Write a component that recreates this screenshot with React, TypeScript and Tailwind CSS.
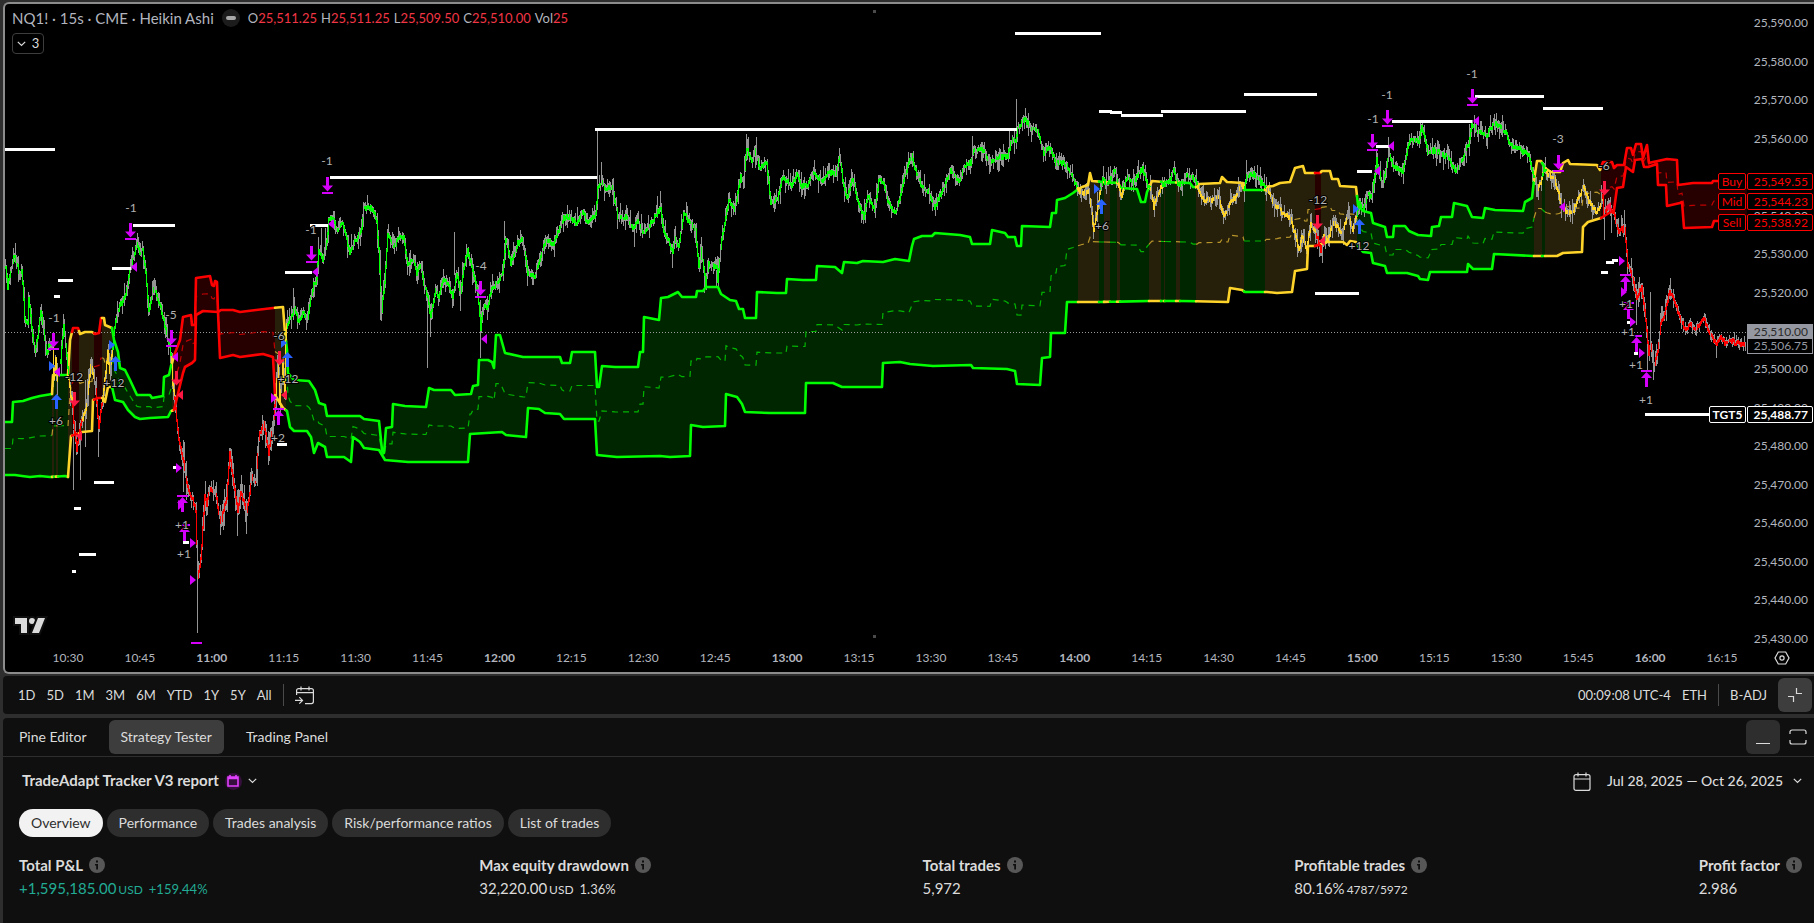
import React from "react";

type Pt = [number, number];
type Tone = "g" | "y" | "r";

const parse = (s: string): Pt[] =>
  s
    .trim()
    .split(/\s+/)
    .map((p) => p.split(",").map(Number) as Pt);

const LINE: Record<Tone, string> = { g: "#00ff00", y: "#ffd42a", r: "#ff0000" };
const FILL: Record<Tone, string> = { g: "#002600", y: "#26200b", r: "#260000" };
const MID: Record<Tone, string> = { g: "#00b400", y: "#b8952a", r: "#c00000" };

const UPPER = parse(`5,422 12,422 13,402 23,401 32,398 40,396 52,394 53,375 68,375 70,340 73,328 78,328 80,334 85,332 92,332 95,334 99,333 101,318
104,318 105,325 112,328 114,340 118,352 120,368 125,370 130,380 137,395 150,395 152,398 163,396 164,377 169,375 171,366 175,353 180,340 183,317
191,315 192,325 195,325 196,278 203,277 210,276 212,285 214,286 215,281 217,282 218,312 221,310 233,310 240,312 248,311 273,308 283,307 285,333 287,350 288,373
294,380 309,381 315,390 319,403 325,405 327,416 360,416 364,419 379,421 382,450 384,453 386,428 392,427 393,404 405,406 426,407 429,388 434,390
451,390 455,395 471,394 473,386 478,385 479,360 488,360 492,362 494,368 496,335 500,335 505,353 523,357 560,357 562,363 570,363 572,352 595,352
597,387 599,387 602,366 615,367 638,367 640,352 643,352 644,317 659,320 661,298 668,297 678,292 682,297 696,297 697,291 703,291 706,287 718,287 721,294
730,300 736,301 739,309 743,309 745,318 756,318 757,292 777,293 786,293 787,279 803,280 816,280 817,266 835,267 842,273 844,262 857,263 863,261
883,262 895,259 909,261 912,246 914,239 922,236 932,236 935,233 960,235 970,237 972,244 990,244 992,230 1005,233 1008,237 1015,237 1017,246
1021,246 1022,226 1050,227 1052,213 1056,213 1057,200 1065,198 1073,193 1077,190 1082,187 1088,185 1090,173 1092,181 1103,182 1118,183 1121,188
1137,189 1141,202 1145,202 1147,192 1152,181 1163,182 1190,183 1193,187 1197,187 1199,184 1220,183 1222,177 1227,182 1243,183 1244,190 1265,190
1266,187 1273,186 1280,183 1290,182 1295,168 1303,166 1305,173 1320,173 1322,171 1330,171 1332,179 1338,179 1340,186 1356,187 1358,205 1363,211
1371,213 1373,223 1385,227 1387,237 1393,237 1394,226 1405,226 1409,231 1418,235 1431,236 1432,227 1439,226 1441,217 1452,217 1454,203 1467,206
1472,217 1483,218 1485,208 1495,210 1523,211 1525,202 1532,198 1534,180 1537,161 1541,161 1545,168 1551,172 1560,172 1563,163 1568,160 1570,164
1597,165 1600,170 1603,162 1612,162 1614,168 1617,165 1624,165 1627,148 1631,148 1633,155 1636,144 1641,144 1643,158 1647,145 1649,163 1653,162
1667,159 1677,160 1678,185 1693,183 1712,183 1713,181 1718,181`);

const LOWER = parse(`5,475 15,475 22,476 30,477 40,476 50,477 65,476 68,477 71,436 82,432 92,431 93,400 98,398 103,398 105,402 108,387 112,387 115,400 123,402
128,410 135,417 140,419 150,418 168,417 171,411 174,410 176,402 183,373 185,367 192,363 195,360 196,315 203,311 218,312 220,358 233,355 240,357 263,354
273,357 275,395 283,408 287,411 290,427 294,431 307,431 311,437 314,453 318,443 325,447 327,457 344,457 351,462 353,437 360,442 364,448 379,450
385,460 408,462 468,462 470,434 502,432 506,435 526,437 528,408 539,409 545,413 560,414 564,419 595,419 597,455 617,457 660,456 670,457 690,456
691,425 703,427 725,426 726,394 737,397 742,404 745,412 770,413 805,413 806,383 833,383 842,387 882,387 883,363 900,362 910,364 933,366 971,365
973,368 1007,369 1015,371 1017,384 1040,385 1042,358 1050,357 1051,333 1065,333 1067,302 1100,302 1150,301 1180,301 1228,302 1230,288 1242,290
1245,292 1267,292 1277,293 1292,292 1295,271 1307,269 1308,246 1315,246 1327,242 1343,242 1347,245 1350,241 1356,242 1358,246 1363,252 1371,253
1373,263 1385,266 1387,273 1407,273 1418,276 1420,279 1428,280 1430,272 1467,272 1468,264 1473,269 1492,269 1494,254 1533,256 1547,256 1557,256
1563,253 1582,252 1583,227 1588,222 1601,218 1614,210 1617,188 1623,187 1626,167 1633,172 1635,160 1642,159 1644,167 1648,167 1657,164 1658,185
1666,185 1667,206 1680,203 1682,202 1684,228 1712,227 1714,221 1718,221`);

// Band tone for each stretch: the tone holds from the given x up to the next entry.
const ZONES: [number, Tone][] = [
  [5, "g"], [52, "y"], [54, "g"], [56, "y"], [58, "g"], [68, "y"], [72, "r"], [79, "y"], [94, "r"], [102, "y"], [112, "g"],
  [172, "y"], [174, "r"], [275, "y"], [286, "g"], [1078, "y"], [1099, "g"], [1104, "y"], [1110, "g"], [1117, "y"], [1120, "g"],
  [1149, "y"], [1161, "g"], [1164, "y"], [1165, "g"], [1176, "y"], [1180, "g"], [1196, "y"], [1244, "g"], [1265, "y"],
  [1315, "r"], [1321, "y"], [1357, "g"], [1534, "y"], [1542, "g"], [1545, "y"], [1601, "r"],
];
const BAND_END = 1718;

const PRICE: [Tone, string][] = [
  ["g", "5,267 7,286 10,272 13,254 16,262 19,275 21,268 24,317 27,322 28,298 31,325 34,350 37,335 40,310 43,330 46,353 49,342 52,343"],
  ["y", "52,343 53,378 55,360 57,380"],
  ["g", "60,360 63,323 65,345 67,367 68,376"],
  ["y", "68,376 70,395 72,405"],
  ["r", "72,405 73,423 76,448 80,425 82,418"],
  ["y", "82,418 86,403 90,363 93,378 95,390"],
  ["r", "95,390 98,427 100,412 102,400"],
  ["y", "102,400 104,380 107,353 109,370 112,348"],
  ["g", "112,348 113,333 117,310 121,302 125,293 130,267 133,255 136,243 139,252 142,250 145,273 148,310 151,298 153,287 160,307 166,333 171,357"],
  ["y", "171,357 172,383 174,397"],
  ["r", `174,397 175,410 178,437 183,463 187,487 191,497 195,510 197,577 200,560 204,497 206,503 210,487 215,493 220,523 226,497 229,453 233,483 237,510
  240,490 246,513 251,477 255,483 258,437 263,423 268,453 272,427 275,397`],
  ["y", "275,397 277,360 279,402 281,380 282,363 284,395 285,340 286,325"],
  ["g", `286,325 290,317 294,308 298,323 303,312 307,320 311,293 313,283 316,280 318,250 322,258 326,243 328,220 332,217 337,230 342,223 345,233 349,253 353,243 357,237
  361,227 363,208 368,207 373,210 376,220 378,250 381,310 384,280 387,233 393,247 398,237 403,238 407,263 413,260 416,273 419,263 423,283 427,297
  430,317 435,290 438,297 443,277 448,283 452,297 456,273 460,293 463,267 467,250 472,270 477,290 480,327 483,307 487,307 491,287 497,283 502,273
  505,237 510,263 517,243 522,238 527,273 534,277 538,263 545,240 553,243 558,230 563,217 570,217 575,223 582,212 587,223 595,213 597,187 602,183
  605,188 612,187 617,217 625,217 632,227 637,220 643,233 650,223 655,215 660,207 663,233 668,240 672,253 674,237 678,247 683,213 690,223 695,230
  698,267 701,250 705,283 708,263 716,267 717,280 721,240 728,200 734,210 740,177 743,183 746,147 751,162 755,150 759,167 766,163 770,202 777,197
  782,177 792,185 796,173 800,185 807,185 812,173 822,180 828,172 835,173 839,157 843,187 846,198 852,177 857,200 863,217 867,195 874,210 878,180
  883,182 887,202 895,212 899,200 903,178 911,155 915,170 922,188 928,190 934,207 943,187 950,170 959,182 963,165 970,162 973,148 983,150 988,162
  997,157 1007,155 1011,140 1015,140 1017,127 1024,118 1030,127 1038,133 1043,152 1050,147 1055,163 1065,163 1070,173 1077,188`],
  ["y", "1077,188 1082,194 1088,190 1093,230 1097,207 1100,188"],
  ["g", "1100,188 1102,180 1108,183 1114,170 1118,184"],
  ["y", "1118,184 1121,197 1123,184"],
  ["g", "1123,184 1127,177 1132,183 1138,173 1142,168 1147,187 1150,189"],
  ["y", "1150,189 1153,207 1160,187 1162,184"],
  ["g", "1162,184 1167,183 1173,170 1177,183 1183,183 1186,173 1195,180 1197,187"],
  ["y", "1197,187 1203,200 1212,200 1218,197 1223,217 1230,200 1235,197 1240,185 1244,187"],
  ["g", "1244,187 1246,177 1253,173 1260,182 1266,188"],
  ["y", "1266,188 1273,203 1282,213 1290,217 1294,233 1298,250 1301,237 1306,247 1310,223 1315,232"],
  ["r", "1315,232 1318,242 1320,250 1322,242"],
  ["y", "1322,242 1323,237 1327,241 1330,230 1333,222 1342,233 1347,213 1352,230 1356,215"],
  ["g", `1356,215 1358,203 1363,207 1367,193 1371,197 1374,177 1376,160 1382,187 1385,170 1388,153 1393,167 1402,170 1406,153 1409,140 1418,140 1421,127 1425,140
  1427,152 1433,150 1440,153 1448,157 1453,168 1457,170 1462,157 1468,143 1471,123 1478,132 1486,135 1490,127 1496,123 1505,132 1510,145 1517,147
  1528,155 1534,180`],
  ["y", "1534,180 1537,190 1542,175"],
  ["g", "1542,175 1543,167 1546,172"],
  ["y", "1546,172 1553,177 1558,193 1561,207 1567,213 1572,213 1576,200 1583,187 1588,200 1596,213 1602,197"],
  ["r", `1602,197 1603,213 1607,207 1613,213 1617,230 1624,228 1627,263 1632,277 1636,297 1641,287 1645,320 1648,353 1650,343 1653,367 1657,350 1660,323
  1663,317 1669,290 1675,303 1679,317 1685,330 1689,323 1695,330 1703,317 1708,333 1716,343 1720,337 1725,343 1730,340 1737,343 1745,345`],
];

const SPIKES = [
  [73, 430, 490], [80, 420, 480], [98, 420, 457], [85, 380, 447], [197, 577, 633], [183, 440, 492], [237, 490, 536], [246, 500, 534], [220, 505, 535],
  [293, 288, 318], [318, 237, 250], [321, 228, 255], [325, 228, 250], [380, 250, 320], [427, 297, 368], [430, 317, 337], [480, 300, 358], [597, 129, 190], [601, 162, 183],
  [454, 232, 275], [504, 221, 240], [460, 280, 311], [634, 230, 247], [660, 191, 212], [672, 253, 268], [704, 275, 293], [716, 270, 287], [746, 134, 150],
  [839, 148, 160], [972, 136, 150], [1009, 131, 150], [1016, 99, 130], [1093, 215, 239], [1138, 160, 175], [1246, 160, 180],
  [1322, 240, 263], [1388, 137, 155], [1376, 155, 165], [1403, 165, 184], [1545, 157, 170], [1604, 215, 240], [1611, 205, 233], [1624, 210, 228],
  [1631, 258, 277], [1636, 284, 325], [1650, 292, 350], [1647, 340, 370], [1653, 350, 380], [1716, 340, 358],
];

const TARGETS: [number, number, number][] = [
  [5, 55, 149], [58, 73, 280], [54, 60, 296], [112, 131, 268], [133, 175, 225], [330, 597, 177], [310, 328, 225], [285, 312, 272], [595, 1017, 129],
  [94, 114, 482], [74, 81, 508], [79, 96, 554], [72, 76, 571], [173, 176, 467], [183, 189, 542], [277, 287, 444], [1015, 1101, 33], [1099, 1112, 111],
  [1110, 1122, 112], [1121, 1163, 115], [1161, 1246, 111], [1244, 1317, 94], [1315, 1359, 293], [1357, 1372, 171], [1376, 1389, 146], [1392, 1472, 121],
  [1475, 1544, 96], [1543, 1603, 108], [1606, 1614, 262], [1612, 1618, 260], [1601, 1608, 272], [1627, 1630, 322], [1634, 1638, 353], [1645, 1709, 414],
];

const PURPLE = "#d500f9";
const BLUE = "#2962ff";
const RED = "#ff1744";

const EXITS_DOWN: Pt[] = [[53, 333], [130, 223], [171, 330], [311, 246], [327, 177], [480, 281], [1372, 134], [1387, 110], [1472, 89], [1558, 155]];
const EXITS_UP: Pt[] = [[278, 409], [182, 496], [184, 525], [1625, 275], [1628, 303], [1636, 336], [1646, 371]];
const BUYS: Pt[] = [[56, 393], [115, 355], [287, 351], [1101, 198], [1359, 218]];
const SELLS: Pt[] = [[74, 392], [176, 371], [279, 351], [1317, 215], [1604, 181]];
const LEFT_TRI: [number, number, string][] = [
  [57, 372, PURPLE], [134, 267, PURPLE], [175, 357, PURPLE], [315, 272, PURPLE], [331, 224, PURPLE], [484, 339, PURPLE], [1377, 171, PURPLE],
  [1391, 146, PURPLE], [1476, 121, PURPLE], [1562, 207, PURPLE], [79, 436, RED], [180, 395, RED], [284, 395, RED], [1322, 241, RED], [1608, 207, RED],
];
const RIGHT_TRI: [number, number, string][] = [
  [52, 366, BLUE], [112, 345, BLUE], [284, 343, BLUE], [1097, 189, BLUE], [1356, 209, BLUE], [274, 398, PURPLE], [179, 468, PURPLE],
  [181, 505, PURPLE], [193, 543, PURPLE], [193, 580, PURPLE], [1622, 261, PURPLE], [1624, 292, PURPLE], [1633, 322, PURPLE], [1642, 353, PURPLE],
];
const QTY: [number, number, string][] = [
  [54, 318, "-1"], [131, 208, "-1"], [171, 315, "-5"], [74, 377, "-12"], [56, 421, "+6"], [114, 383, "+12"], [279, 336, "-6"], [288, 379, "+12"],
  [278, 438, "+2"], [182, 525, "+1"], [184, 554, "+1"], [311, 230, "-1"], [327, 161, "-1"], [481, 266, "-4"], [1102, 226, "+6"], [1318, 200, "-12"],
  [1359, 246, "+12"], [1373, 119, "-1"], [1387, 95, "-1"], [1472, 74, "-1"], [1558, 139, "-3"], [1604, 166, "-6"], [1626, 304, "+1"],
  [1628, 332, "+1"], [1636, 365, "+1"], [1646, 400, "+1"],
];

const at = (pts: Pt[], x: number): number => {
  if (x <= pts[0][0]) return pts[0][1];
  for (let i = 1; i < pts.length; i++) {
    if (x <= pts[i][0]) {
      const [x0, y0] = pts[i - 1];
      const [x1, y1] = pts[i];
      return x1 === x0 ? y1 : y0 + ((y1 - y0) * (x - x0)) / (x1 - x0);
    }
  }
  return pts[pts.length - 1][1];
};

const cut = (pts: Pt[], a: number, b: number): Pt[] => [
  [a, at(pts, a)],
  ...pts.filter(([x]) => x > a && x < b),
  [b, at(pts, b)],
];

const MIDDLE: Pt[] = Array.from(new Set([...UPPER, ...LOWER].map(([x]) => x)))
  .sort((a, b) => a - b)
  .map((x) => [x, (at(UPPER, x) + at(LOWER, x)) / 2]);

const join = (pts: Pt[]) => pts.map(([x, y]) => `${x},${y.toFixed(1)}`).join(" ");

const bands = ZONES.map(([a, tone], i) => {
  const b = i + 1 < ZONES.length ? ZONES[i + 1][0] : BAND_END;
  const up = cut(UPPER, a, b);
  const low = cut(LOWER, a, b);
  return { a, tone, up: join(up), low: join(low), mid: join(cut(MIDDLE, a, b)), area: join([...up, ...low.slice().reverse()]) };
});

// Deterministic noise, so that every render draws the same candles.
const noise = (() => {
  let s = 20251026;
  return () => {
    s = (s * 1664525 + 1013904223) % 4294967296;
    return s / 4294967296;
  };
})();

const candles = PRICE.map(([tone, s]) => {
  const pts = parse(s);
  const a = pts[0][0];
  const b = pts[pts.length - 1][0];
  let wick = "";
  let body = "";
  let prev = at(pts, a);
  for (let x = a; x <= b; x++) {
    const y = at(pts, x) + (noise() - 0.5) * 4;
    const amp = x > 1676 ? 5 : x > 180 && x < 275 ? 13 : 9;
    const lo = Math.min(prev, y);
    const hi = Math.max(prev, y);
    wick += `M${x + 0.5} ${Math.round(lo - 1 - noise() * noise() * amp * 1.6)}V${Math.round(hi + 1 + noise() * noise() * amp * 1.6)}`;
    if (noise() > 0.15) body += `M${x + 0.5} ${Math.round(lo - 1)}V${Math.round(hi + 2)}`;
    prev = y;
  }
  return { tone, wick, body };
});

const spikePath = SPIKES.map(([x, a, b]) => `M${x + 0.5} ${a}V${b}`).join("");

function Arrow({ x, y, dir, color, bar }: { x: number; y: number; dir: "up" | "down"; color: string; bar?: boolean }) {
  const shaft = dir === "down" ? "M-1 0h3v8.5h4L.5 14.5-5 8.5h4z" : "M.5 1L6 7H2V16h-3V7H-5z";
  return (
    <g transform={`translate(${x} ${y})`} fill={color}>
      <path d={shaft} />
      {bar && <rect x="-5" y={dir === "down" ? 15 : -1} width="11" height="2" />}
    </g>
  );
}

function Chart() {
  return (
    <svg
      className="block h-[640px] w-full"
      viewBox="5 4 1742 640"
      preserveAspectRatio="xMaxYMin slice"
      role="img"
      aria-label="NQ1! price chart"
    >
      {bands.map((z) => (
        <polygon key={z.a} points={z.area} fill={FILL[z.tone]} shapeRendering="crispEdges" />
      ))}
      <rect x="1718" y="181" width="29" height="40" fill={FILL.r} />
      <line x1="5" x2="1747" y1="332.5" y2="332.5" stroke="#9a9a9a" strokeDasharray="1 2" />
      {bands.map((z) => (
        <polyline key={z.a} points={z.mid} fill="none" stroke={MID[z.tone]} strokeDasharray="6 5" strokeWidth="1.2" />
      ))}
      <path d={candles.map((c) => c.wick).join("")} stroke="#949494" strokeWidth="1" fill="none" shapeRendering="crispEdges" />
      <path d={spikePath} stroke="#949494" strokeWidth="1" fill="none" shapeRendering="crispEdges" />
      {bands.map((z) => (
        <g key={z.a} fill="none" stroke={LINE[z.tone]} strokeWidth="2.6" strokeLinejoin="round" strokeLinecap="round">
          <polyline points={z.up} />
          <polyline points={z.low} />
        </g>
      ))}
      {candles.map((c, i) => (
        <path key={i} d={c.body} stroke={LINE[c.tone]} strokeWidth="1" fill="none" shapeRendering="crispEdges" />
      ))}
      {TARGETS.map(([a, b, y]) => (
        <rect key={`${a}-${y}`} x={a} y={y - 1} width={b - a} height="3" fill="#fff" />
      ))}
      {EXITS_DOWN.map(([x, y]) => (
        <Arrow key={`${x}-${y}`} x={x} y={y} dir="down" color={PURPLE} bar />
      ))}
      {EXITS_UP.map(([x, y]) => (
        <Arrow key={`${x}-${y}`} x={x} y={y} dir="up" color={PURPLE} bar />
      ))}
      {BUYS.map(([x, y]) => (
        <Arrow key={`${x}-${y}`} x={x} y={y} dir="up" color={BLUE} />
      ))}
      {SELLS.map(([x, y]) => (
        <Arrow key={`${x}-${y}`} x={x} y={y} dir="down" color={RED} />
      ))}
      {LEFT_TRI.map(([x, y, c]) => (
        <path key={`${x}-${y}`} d={`M${x - 3} ${y}l6 -5v10z`} fill={c} />
      ))}
      {RIGHT_TRI.map(([x, y, c]) => (
        <path key={`${x}-${y}`} d={`M${x + 3} ${y}l-6 -5v10z`} fill={c} />
      ))}
      {QTY.map(([x, y, t]) => (
        <text key={`${x}-${y}`} x={x} y={y + 4} fontSize="12" fill="#b2b2b2" stroke="#000" strokeWidth="2" paintOrder="stroke" textAnchor="middle">
          {t}
        </text>
      ))}
      <g fill="#dbdbdb" stroke="#0f0f0f" strokeWidth="4" paintOrder="stroke">
        <path d="M15 618h12v15h-6v-9h-6z" />
        <circle cx="32" cy="621" r="3" />
        <path d="M38 618h7l-6 15h-7z" />
      </g>
      <rect x="873" y="10" width="3" height="3" fill="#4a4a4a" />
      <rect x="873" y="635" width="3" height="3" fill="#4a4a4a" />
      <rect x="191" y="642" width="11" height="2" fill={PURPLE} />
    </svg>
  );
}

// Scale steps from 25,590 down to 25,430; null leaves a step blank where a tag stands in for it.
const PRICES = Array.from({ length: 17 }, (_, i) => (i === 4 || i === 8 ? null : `25,${590 - i * 10}.00`));
const TIMES = Array.from({ length: 24 }, (_, i) => {
  const m = 630 + i * 15;
  return `${Math.floor(m / 60)}:${String(m % 60).padStart(2, "0")}`;
});
const BOLD_TIMES = ["11:00", "12:00", "13:00", "14:00", "15:00", "16:00"];

function PriceTag({ className, nameClass = "w-[28px]", name, value }: { className: string; nameClass?: string; name: string; value: string }) {
  return (
    <div className={`absolute right-px flex h-[17px] gap-px text-xs leading-[15px] ${className}`}>
      <span className={`rounded-xs border border-current bg-black text-center ${nameClass}`}>{name}</span>
      <span className="w-[66px] rounded-xs border border-current bg-black pr-1 text-right">{value}</span>
    </div>
  );
}

function Legend() {
  const items: [string, string][] = [["O", "25,511.25"], ["H", "25,511.25"], ["L", "25,509.50"], ["C", "25,510.00"], ["Vol", "25"]];
  return (
    <div className="absolute top-1 left-[7px] flex flex-col items-start gap-[5px]">
      <div className="flex h-5 items-center text-[#b2b5be]">
        <h1 className="text-[15px] leading-5 whitespace-nowrap">NQ1! · 15s · CME · Heikin Ashi</h1>
        <span className="mx-2 flex size-[18px] items-center justify-center rounded-full bg-[#1c1c1c]">
          <span className="h-1 w-2.5 rounded-xs bg-[#a8a8a8]" />
        </span>
        <div className="flex gap-1 text-[13px]">
          {items.map(([k, v]) => (
            <span key={k}>
              {k}
              <span className="text-[#f23645]">{v}</span>
            </span>
          ))}
        </div>
      </div>
      <button type="button" className="flex h-[21px] w-8 items-center justify-center gap-1.5 rounded-sm border border-[#3d3d3d] bg-black text-[13px] text-[#dbdbdb]">
        <Chevron />3
      </button>
    </div>
  );
}

function Chevron() {
  return (
    <svg width="9" height="6" viewBox="0 0 9 6" fill="none" stroke="currentColor" strokeWidth="1.2" aria-hidden="true">
      <path d="M.8.8 4.5 4.5 8.2.8" />
    </svg>
  );
}

function Info() {
  return (
    <svg width="16" height="16" viewBox="0 0 16 16" aria-hidden="true">
      <circle cx="8" cy="8" r="8" fill="#575757" />
      <path d="M7 3.5h2v2H7zM6 7h3v5.5H7.2V8.4H6z" fill="#0f0f0f" />
    </svg>
  );
}

const RANGES = ["1D", "5D", "1M", "3M", "6M", "YTD", "1Y", "5Y", "All"];
const PILLS = ["Overview", "Performance", "Trades analysis", "Risk/performance ratios", "List of trades"];

function Metric({ label, children, className = "" }: { label: string; children: React.ReactNode; className?: string }) {
  return (
    <div>
      <dt className="flex items-center gap-1.5 text-[15px] leading-5 font-bold whitespace-nowrap">
        {label}
        <Info />
      </dt>
      <dd className={`flex items-baseline gap-0.5 pt-px text-[15px] leading-6 whitespace-nowrap ${className}`}>{children}</dd>
    </div>
  );
}

export default function App() {
  return (
    <div className="min-h-screen bg-[#2e2e2e] pt-0.5 pl-[3px] font-['Lato',sans-serif] text-sm text-[#dbdbdb]">
      <section className="relative rounded-tl-md rounded-bl-md border-y-2 border-l-2 border-[#8c8c8c] bg-black text-[#b2b5be]">
        <div className="grid h-[644px] grid-cols-[minmax(0,1fr)_67px]">
          <Chart />
          <ul className="flex h-[654px] flex-col justify-around pr-1.5 text-right text-xs leading-4">
            {PRICES.map((p, i) => (
              <li key={i} className="h-4">
                {p}
              </li>
            ))}
          </ul>
        </div>
        <div className="flex h-6 items-center pb-1">
          <ul className="ml-[27px] grid flex-1 grid-cols-24 text-center text-xs leading-4">
            {TIMES.map((t) => (
              <li key={t} className={BOLD_TIMES.includes(t) ? "font-bold" : ""}>
                {t}
              </li>
            ))}
          </ul>
          <button type="button" aria-label="Scale settings" className="flex w-14 items-center justify-center pr-2 text-[#dbdbdb]">
            <svg width="16" height="14" viewBox="0 0 16 14" fill="none" stroke="currentColor" strokeWidth="1.2">
              <path d="M4.3 1h7.4L15 7l-3.3 6H4.3L1 7z" />
              <circle cx="8" cy="7" r="2.1" />
            </svg>
          </button>
        </div>

        <Legend />

        <PriceTag className="top-[169px] text-[#ff0000]" name="Buy" value="25,549.55" />
        <PriceTag className="top-[189px] text-[#ff0000]" name="Mid" value="25,544.23" />
        <PriceTag className="top-[210px] text-[#ff0000]" name="Sell" value="25,538.92" />
        <PriceTag className="top-[402px] font-bold text-white" nameClass="w-[37px]" name="TGT5" value="25,488.77" />
        <div className="absolute top-[320px] right-px w-[66px] border border-[#9598a1] bg-black text-right text-xs leading-[14px] text-[#9598a1]">
          <div className="bg-[#9598a1] pr-1 text-[#2a2a2a]">25,510.00</div>
          <div className="pr-1">25,506.75</div>
        </div>
      </section>

      <nav className="mt-0.5 flex h-[38px] items-center justify-between rounded-l-sm bg-[#0f0f0f] pr-0.5 pl-[15px] text-[13px]" aria-label="Date range">
        <div className="flex items-center gap-[11px]">
          {RANGES.map((r) => (
            <button key={r} type="button">
              {r}
            </button>
          ))}
          <span className="h-[22px] w-px bg-[#4a4a4a]" />
          <button type="button" aria-label="Go to date">
            <svg width="20" height="19" viewBox="0 0 20 19" fill="none" stroke="currentColor" strokeWidth="1.2">
              <path d="M1.6 9V4.6a2 2 0 0 1 2-2h12.8a2 2 0 0 1 2 2v11a2 2 0 0 1-2 2H10M1.6 6.6h16.8M6 .5v4M14 .5v4M0 14.4h7.5M4.3 11.2l3.2 3.2-3.2 3.2" />
            </svg>
          </button>
        </div>
        <div className="flex items-center gap-[11px]">
          <button type="button">00:09:08 UTC-4</button>
          <button type="button">ETH</button>
          <span className="h-[22px] w-px bg-[#4a4a4a]" />
          <button type="button">B-ADJ</button>
          <button type="button" aria-label="Collapse panel" className="flex size-[34px] items-center justify-center rounded-md bg-[#3d3d3d]">
            <svg width="14" height="14" viewBox="0 0 14 14" fill="none" stroke="currentColor" strokeWidth="1.2">
              <path d="M8.5 0v5.5H14M0 8.5h5.5V14" />
            </svg>
          </button>
        </div>
      </nav>

      <section className="mt-1 rounded-tl-sm border-b border-black bg-[#0f0f0f]">
        <div className="flex h-[39px] items-center justify-between border-b border-[#2e2e2e] pr-0.5 pl-1">
          <div className="flex gap-2.5">
            <button type="button" className="h-[34px] px-3">Pine Editor</button>
            <button type="button" className="h-[34px] rounded-md bg-[#3d3d3d] px-3">Strategy Tester</button>
            <button type="button" className="h-[34px] px-3">Trading Panel</button>
          </div>
          <div className="flex gap-1">
            <button type="button" aria-label="Minimize" className="flex size-[34px] items-end justify-center rounded-md bg-[#2e2e2e] pb-2.5">
              <span className="h-px w-3.5 bg-[#dbdbdb]" />
            </button>
            <button type="button" aria-label="Maximize" className="flex h-[30px] w-7 items-center justify-center self-center">
              <svg width="18" height="16" viewBox="0 0 18 16" fill="none" stroke="currentColor" strokeWidth="1.2">
                <path d="M1 5V3a2 2 0 0 1 2-2h12a2 2 0 0 1 2 2v2M1 11v2a2 2 0 0 0 2 2h12a2 2 0 0 0 2-2v-2" />
              </svg>
            </button>
          </div>
        </div>

        <div className="flex items-center justify-between pt-3 pr-3 pl-[19px]">
          <button type="button" className="flex h-6 items-center gap-1.5 text-[15px] font-bold">
            TradeAdapt Tracker V3 report
            <span className="flex size-[17px] items-center justify-center rounded-full bg-[#36103c]">
              <svg width="12" height="12" viewBox="0 0 12 12" fill="none" stroke="#e040fb" strokeWidth="1.6" aria-hidden="true">
                <path d="M1 2h10v9H1zM1 3.4h10M3 0v2M9 0v2" />
              </svg>
            </span>
            <Chevron />
          </button>
          <button type="button" className="flex h-6 items-center font-medium">
            <svg className="mr-4" width="18" height="19" viewBox="0 0 18 19" fill="none" stroke="currentColor" strokeWidth="1.2" aria-hidden="true">
              <path d="M3 2.6h12a2 2 0 0 1 2 2v11.8a2 2 0 0 1-2 2H3a2 2 0 0 1-2-2V4.6a2 2 0 0 1 2-2zM1 7h16M5 .5v4M13 .5v4" />
            </svg>
            Jul 28, 2025 — Oct 26, 2025
            <span className="ml-2.5">
              <Chevron />
            </span>
          </button>
        </div>

        <div className="flex gap-1 px-4 pt-4">
          {PILLS.map((p, i) => (
            <button
              key={p}
              type="button"
              className={`h-7 rounded-full px-3 whitespace-nowrap ${i === 0 ? "bg-[#f2f2f2] text-[#2e2e2e]" : "bg-[#2e2e2e]"}`}
            >
              {p}
            </button>
          ))}
        </div>

        <dl className="flex justify-between pt-[18px] pr-3 pb-[22px] pl-4">
          <Metric label="Total P&L" className="text-[#22ab94]">
            +1,595,185.00<span className="text-xs">USD</span>
            <span className="pl-1 text-[13px]">+159.44%</span>
          </Metric>
          <Metric label="Max equity drawdown">
            32,220.00<span className="text-xs">USD</span>
            <span className="pl-1 text-[13px]">1.36%</span>
          </Metric>
          <Metric label="Total trades">5,972</Metric>
          <Metric label="Profitable trades">
            80.16%<span className="text-xs">4787/5972</span>
          </Metric>
          <Metric label="Profit factor">2.986</Metric>
        </dl>
      </section>
    </div>
  );
}
